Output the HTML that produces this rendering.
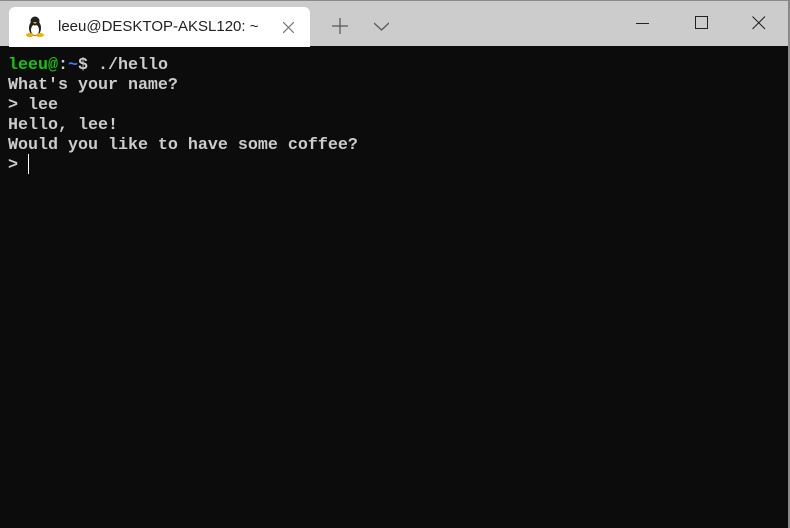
<!DOCTYPE html>
<html><head><style>
body{margin:0;width:790px;height:528px;overflow:hidden;background:#0c0c0c;position:relative;font-family:"Liberation Sans",sans-serif}
#bar{position:absolute;left:0;top:0;width:790px;height:46px;background:#cccccc;border-top:1px solid #8a8a8a;box-sizing:border-box}
#tab{position:absolute;left:9px;top:6px;width:301px;height:40px;background:#fff;border-radius:6px 6px 0 0}
#tab .t{position:absolute;left:49px;top:11px;font-size:15px;color:#222}
#term{position:absolute;left:8px;top:56px;font-family:"Liberation Mono",monospace;font-size:16.67px;line-height:20px;color:#cccccc;white-space:pre;font-weight:bold}
.g{color:#16c60c}.b{color:#3b78ff}
#rb{position:absolute;right:0;top:0;width:2px;height:528px;background:#8a8a8a}
</style></head><body>
<div id="bar">
<div id="tab">
<svg style="position:absolute;left:16px;top:8px" width="20" height="22" viewBox="0 0 20 22">
<ellipse cx="10" cy="13" rx="6" ry="8" fill="#222"/><ellipse cx="10" cy="15" rx="4" ry="5.5" fill="#fff"/>
<circle cx="10" cy="6" r="4.5" fill="#222"/><path d="M8 7 L12 7 L10 9Z" fill="#f0b000"/>
<ellipse cx="5" cy="20" rx="4" ry="2" fill="#f0b000"/><ellipse cx="15" cy="20" rx="4" ry="2" fill="#f0b000"/>
</svg>
<div class="t">leeu@DESKTOP-AKSL120: ~</div>
<svg style="position:absolute;left:274px;top:15px" width="11" height="11"><path d="M0 0L11 11M11 0L0 11" stroke="#777" stroke-width="1.2"/></svg>
</div>
<svg style="position:absolute;left:332px;top:17px" width="16" height="16"><path d="M8 0V16M0 8H16" stroke="#555" stroke-width="1.2"/></svg>
<svg style="position:absolute;left:374px;top:21px" width="15" height="9"><path d="M0 1L7.5 8L15 1" stroke="#555" stroke-width="1.2" fill="none"/></svg>
<svg style="position:absolute;left:636px;top:21px" width="14" height="3"><path d="M0 1.5H13" stroke="#222" stroke-width="1"/></svg>
<svg style="position:absolute;left:695px;top:15px" width="14" height="14"><rect x="0.5" y="0.5" width="12" height="12" fill="none" stroke="#222" stroke-width="1"/></svg>
<svg style="position:absolute;left:752px;top:15px" width="14" height="14"><path d="M0.5 0.5L13 13M13 0.5L0.5 13" stroke="#222" stroke-width="1"/></svg>
</div>
<div id="term"><span class="g">leeu@</span>:<span class="b">~</span>$ ./hello
What's your name?
&gt; lee
Hello, lee!
Would you like to have some coffee?
&gt; </div>
<div style="position:absolute;left:28px;top:154px;width:1px;height:20px;background:#fff"></div>
<div id="rb"></div>
</body></html>
